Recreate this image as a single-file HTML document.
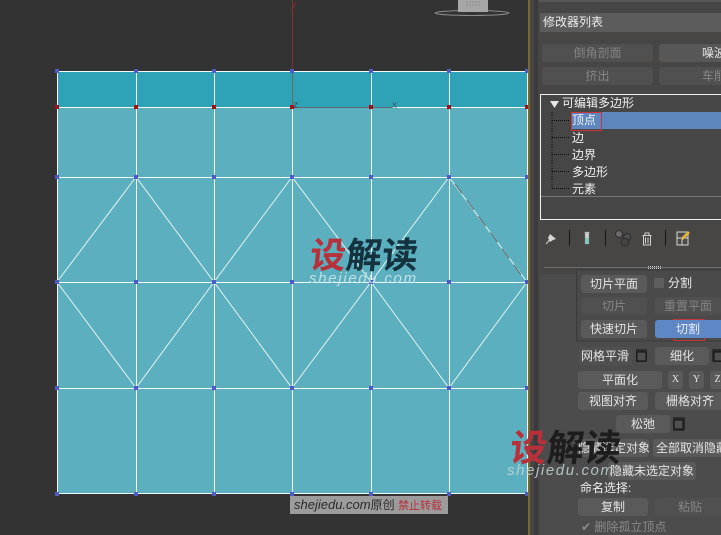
<!DOCTYPE html>
<html><head><meta charset="utf-8">
<style>
html,body{margin:0;padding:0;background:#333}
#r{position:relative;width:721px;height:535px;overflow:hidden;background:#333;font-family:"Liberation Sans","Noto Sans CJK SC",sans-serif}
svg{position:absolute;left:0;top:0}
.t{position:absolute;white-space:nowrap;font-size:12px;line-height:16px;color:#e4e4e4}
.b{position:absolute;background:#5a5a5a;border-radius:3px;color:#e4e4e4;font-size:12px;text-align:center;white-space:nowrap;overflow:hidden;height:18px;line-height:18px}
.d{background:#505050;color:#858585}
</style></head><body><div id="r">
<svg width="721" height="535" viewBox="0 0 721 535">
<rect x="57" y="71" width="471" height="36" fill="#2ea2b6"/>
<rect x="57" y="107" width="471" height="387" fill="#5bafbe"/>
<g stroke="#f4fbfb" stroke-width="1" fill="none" shape-rendering="crispEdges">
<path d="M57.5 71v423M136.5 71v423M214.5 71v423M292.5 71v423M371.5 71v423M449.5 71v423M527.5 71v423"/>
<path d="M57 71.5h471M57 107.5h471M57 177.5h471M57 282.5h471M57 388.5h471M57 493.5h471"/>
</g>
<path d="M136 177L57 282L136 388L214 282ZM292 177L214 282L292 388L371 282ZM449 177L371 282L449 388L527 282Z" stroke="#e4f4f5" stroke-width="1" fill="none"/>
<path d="M455 184L522 276" stroke="#666" stroke-width="1" stroke-dasharray="12 8" fill="none"/>
<path d="M292.500 0V107" stroke="#8a2d2d" stroke-width="1"/>
<path d="M292.500 70V107" stroke="#6a6a5a" stroke-width="1"/>
<path d="M293 107.500H392" stroke="#5c6a70" stroke-width="1"/>
<g fill="#4f5ac8">
<rect x="55" y="69" width="4" height="4"/><rect x="134" y="69" width="4" height="4"/><rect x="212" y="69" width="4" height="4"/><rect x="290" y="69" width="4" height="4"/><rect x="369" y="69" width="4" height="4"/><rect x="447" y="69" width="4" height="4"/><rect x="525" y="69" width="4" height="4"/>
<rect x="55" y="175" width="4" height="4"/><rect x="134" y="175" width="4" height="4"/><rect x="212" y="175" width="4" height="4"/><rect x="290" y="175" width="4" height="4"/><rect x="369" y="175" width="4" height="4"/><rect x="447" y="175" width="4" height="4"/><rect x="525" y="175" width="4" height="4"/>
<rect x="55" y="280" width="4" height="4"/><rect x="134" y="280" width="4" height="4"/><rect x="212" y="280" width="4" height="4"/><rect x="290" y="280" width="4" height="4"/><rect x="369" y="280" width="4" height="4"/><rect x="447" y="280" width="4" height="4"/><rect x="525" y="280" width="4" height="4"/>
<rect x="55" y="386" width="4" height="4"/><rect x="134" y="386" width="4" height="4"/><rect x="212" y="386" width="4" height="4"/><rect x="290" y="386" width="4" height="4"/><rect x="369" y="386" width="4" height="4"/><rect x="447" y="386" width="4" height="4"/><rect x="525" y="386" width="4" height="4"/>
<rect x="55" y="492" width="4" height="4"/><rect x="134" y="492" width="4" height="4"/><rect x="212" y="492" width="4" height="4"/><rect x="290" y="492" width="4" height="4"/><rect x="369" y="492" width="4" height="4"/><rect x="447" y="492" width="4" height="4"/><rect x="525" y="492" width="4" height="4"/>
</g>
<g fill="#a50f17">
<rect x="55" y="105" width="4" height="4"/><rect x="134" y="105" width="4" height="4"/><rect x="212" y="105" width="4" height="4"/><rect x="290" y="105" width="4" height="4"/><rect x="369" y="105" width="4" height="4"/><rect x="447" y="105" width="4" height="4"/><rect x="525" y="105" width="4" height="4"/>
</g>
<!-- viewcube -->
<ellipse cx="472" cy="13" rx="37" ry="2.500" fill="none" stroke="#8c8c8c" stroke-width="1"/>
<rect x="458" y="0" width="30" height="12" fill="#a6a6a6"/>
<path d="M466 2h14M466 5h14" stroke="#8c8c8c" stroke-dasharray="2 1"/>
<!-- divider -->
<rect x="528" y="0" width="2" height="535" fill="#7a6a30"/>
<rect x="530" y="0" width="191" height="535" fill="#474645"/>
<rect x="534" y="0" width="4" height="535" fill="#3b3a3c"/>
<rect x="539" y="0" width="182" height="2" fill="#585858"/>
<rect x="540" y="13" width="181" height="19" fill="#5c5c5c"/>
<!-- list -->
<rect x="540.500" y="94.500" width="190" height="125" fill="#464646" stroke="#f0f0f0" stroke-width="1"/>
<rect x="541" y="196" width="180" height="1" fill="#777"/>
<rect x="571" y="112" width="150" height="17" fill="#5e87bf"/>
<rect x="571.500" y="112.500" width="30" height="18" fill="none" stroke="#c8353c"/>
<path d="M550 101h9l-4.500 7z" fill="#e6e6e6"/>
<path d="M552 112V188.500M552 120.500H569M552 137.500H569M552 154.500H569M552 171.500H569M552 188.500H569" stroke="#0c0c0c" stroke-dasharray="1 1" fill="none"/>
<!-- toolbar icons -->
<path d="M546 244L552 237" stroke="#cfcfcf" stroke-width="1"/>
<path d="M550 234l6 5-3 1-3 2-2-4 1-2z" fill="#d6d6d6"/>
<path d="M569.500 230V246M605.500 230V246M665.500 230V246" stroke="#161616"/>
<path d="M584 232h6l-1 1v11h-4v-11z" fill="#d0d0d0" stroke="#777" stroke-width=".5"/>
<rect x="585.500" y="238" width="3" height="6" fill="#79cfc0"/>
<circle cx="619" cy="234" r="3.500" fill="#6a6a6a" stroke="#2c2c2c"/>
<circle cx="627" cy="237" r="3.500" fill="#505050" stroke="#2c2c2c"/>
<circle cx="625" cy="242" r="3.800" fill="#444" stroke="#2c2c2c"/>
<path d="M642.500 235.500h9M645 235v-2h4v2M643.500 236v9h7v-9M645.500 237.500v6M648 237.500v6" stroke="#d2d2d2" fill="none"/>
<rect x="677" y="232" width="11" height="13" fill="#4a4a4a" stroke="#d8d8d8"/>
<path d="M677 238h11M682 238v7" stroke="#d8d8d8"/>
<path d="M681 238l7-7 2 2-7 7z" fill="#e2b13a"/>
<!-- rollout -->
<rect x="544" y="267" width="177" height="1" fill="#6d6d6d"/>
<path d="M648 266.500h14M648 268.500h14" stroke="#cfcfcf" stroke-dasharray="1 1"/>
<rect x="540" y="274" width="181" height="261" fill="#4c4c4c"/>
<rect x="576.500" y="270" width="150" height="71" fill="#4a4a4a" stroke="#3a3a3a"/>
<rect x="654" y="278" width="10" height="10" fill="#5e5e5e"/>
<rect x="673.500" y="319.500" width="31" height="21" fill="none" stroke="#c8353c"/>
<!-- square buttons -->
<rect x="636" y="349" width="11" height="13" rx="1" fill="#2c2c2c"/><rect x="637" y="352" width="9" height="9" fill="#4f4f4f" stroke="#111"/>
<rect x="712" y="349" width="11" height="13" rx="1" fill="#2c2c2c"/><rect x="714" y="352" width="9" height="9" fill="#4f4f4f" stroke="#111"/>
<rect x="673" y="417" width="12" height="14" rx="1" fill="#2c2c2c"/><rect x="674" y="420" width="9" height="9" fill="#4f4f4f" stroke="#111"/>
</svg>
<div class="t" style="left:543px;top:14px;color:#ececec">修改器列表</div>
<div class="b d" style="left:542px;top:44px;width:111px">倒角剖面</div>
<div class="b" style="left:659px;top:44px;width:80px;text-align:left;text-indent:43px;background:#575757">噪波</div>
<div class="b d" style="left:542px;top:67px;width:111px">挤出</div>
<div class="b d" style="left:659px;top:67px;width:80px;text-align:left;text-indent:43px">车削</div>
<div class="t" style="left:562px;top:95px;color:#f0f0f0">可编辑多边形</div>
<div class="t" style="left:572px;top:112px;color:#f4f4f4">顶点</div>
<div class="t" style="left:572px;top:130px;color:#f0f0f0">边</div>
<div class="t" style="left:572px;top:147px;color:#f0f0f0">边界</div>
<div class="t" style="left:572px;top:164px;color:#f0f0f0">多边形</div>
<div class="t" style="left:572px;top:181px;color:#f0f0f0">元素</div>
<div class="b" style="left:581px;top:275px;width:66px">切片平面</div>
<div class="t" style="left:668px;top:275px;color:#eee">分割</div>
<div class="b d" style="left:581px;top:297px;width:66px">切片</div>
<div class="b d" style="left:655px;top:297px;width:66px">重置平面</div>
<div class="b" style="left:581px;top:320px;width:66px">快速切片</div>
<div class="b" style="left:655px;top:320px;width:70px;background:#5e87c6;text-indent:-4px;color:#eef">切割</div>
<div class="b" style="left:578px;top:347px;width:54px;background:#505050">网格平滑</div>
<div class="b" style="left:655px;top:347px;width:54px">细化</div>
<div class="b" style="left:578px;top:371px;width:84px">平面化</div>
<div class="b" style="left:668px;top:371px;width:15px;font-size:10px;font-family:'Liberation Serif',serif">X</div>
<div class="b" style="left:689px;top:371px;width:15px;font-size:10px;font-family:'Liberation Serif',serif">Y</div>
<div class="b" style="left:710px;top:371px;width:15px;font-size:10px;font-family:'Liberation Serif',serif">Z</div>
<div class="b" style="left:578px;top:392px;width:70px">视图对齐</div>
<div class="b" style="left:655px;top:392px;width:70px">栅格对齐</div>
<div class="b" style="left:616px;top:415px;width:54px">松弛</div>
<div class="b" style="left:578px;top:439px;width:71px;text-align:right;padding-right:1px;box-sizing:border-box">隐藏选定对象</div>
<div class="b" style="left:653px;top:439px;width:80px;text-align:left;text-indent:3px">全部取消隐藏</div>
<div class="b" style="left:608px;top:462px;width:88px">隐藏未选定对象</div>
<div class="t" style="left:580px;top:480px;color:#eee">命名选择:</div>
<div class="b" style="left:578px;top:498px;width:70px">复制</div>
<div class="b d" style="left:655px;top:498px;width:70px">粘贴</div>
<div class="t" style="left:581px;top:519px;color:#8a8a8a">✔ 删除孤立顶点</div>
<!-- axis labels -->
<div class="t" style="left:291px;top:-2px;font-size:10px;font-style:italic;color:#8a2d2d">y</div>
<div class="t" style="left:293px;top:98px;font-size:10px;color:#3c4a50">z</div>
<div class="t" style="left:392px;top:98px;font-size:10px;color:#3c5a68">x</div>
<!-- watermark 1 -->
<div class="t" style="left:308px;top:237px;font-size:36px;line-height:38px;font-weight:700;color:#b8303a;transform:skewX(-6deg);transform-origin:left bottom">设<span style="color:#14333f">解读</span></div>
<div class="t" style="left:309px;top:270px;font-size:15px;line-height:18px;font-style:italic;letter-spacing:1.7px;color:#bfe0e5">shejiedu.com</div>
<!-- watermark 2 -->
<div class="t" style="left:508px;top:429px;font-size:37px;line-height:40px;font-weight:700;color:#b8303a;transform:skewX(-6deg);transform-origin:left bottom">设<span style="color:#1d1d1d">解读</span></div>
<div class="t" style="left:507px;top:461px;font-size:15px;line-height:20px;font-style:italic;letter-spacing:1.6px;color:#c4d6da;opacity:.85">shejiedu.com</div>
<!-- footer -->
<div style="position:absolute;left:290px;top:496px;width:158px;height:18px;background:#9c9c9c;white-space:nowrap;line-height:18px;font-size:12px;color:#2a2a2a;text-indent:4px"><i style="font-size:13px">shejiedu.com</i>原创 <span style="color:#b8303a;font-size:11px">禁止转载</span></div>
</div></body></html>
